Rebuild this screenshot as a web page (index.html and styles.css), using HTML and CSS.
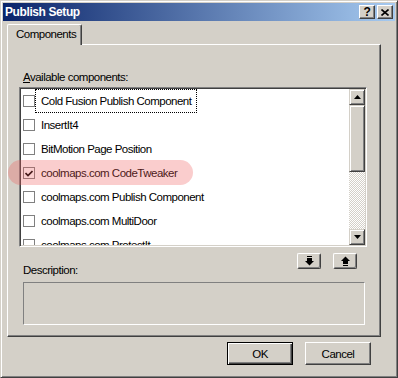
FILE: index.html
```html
<!DOCTYPE html>
<html lang="en">
<head>
  <meta charset="UTF-8" />
  <title>Publish Setup</title>
  <link rel="stylesheet" href="styles.css">
</head>
<body>
  <div class="window">
    <div class="titlebar">
      <span class="title">Publish Setup</span>
      <div class="caption-btns">
        <button class="cap help">?</button>
        <button class="cap">
          <svg width="8" height="7" viewBox="0 0 8 7"><path d="M0.5 0.5 L7.5 6.5 M7.5 0.5 L0.5 6.5" stroke="#000" stroke-width="1.6" fill="none"/></svg>
        </button>
      </div>
    </div>

    <div class="tabs">
      <div class="tab">Components</div>
    </div>

    <div class="panel">
      <div class="label"><u>A</u>vailable components:</div>
      <div class="listbox">
        <ul class="items">
          <li class="item"><span class="check"></span><span class="name focus">Cold Fusion Publish Component</span></li>
          <li class="item"><span class="check"></span><span class="name">InsertIt4</span></li>
          <li class="item"><span class="check"></span><span class="name">BitMotion Page Position</span></li>
          <li class="item"><span class="check"><svg width="8" height="7" viewBox="0 0 8 7"><path d="M0.5 3 L3 5.5 L7.5 1" stroke="#000" stroke-width="1.7" fill="none"/></svg></span><span class="name">coolmaps.com CodeTweaker</span></li>
          <li class="item"><span class="check"></span><span class="name">coolmaps.com Publish Component</span></li>
          <li class="item"><span class="check"></span><span class="name">coolmaps.com MultiDoor</span></li>
          <li class="item"><span class="check"></span><span class="name">coolmaps.com ProtectIt</span></li>
        </ul>
        <div class="scrollbar">
          <div class="sbtn"><svg width="7" height="4" viewBox="0 0 7 4"><path d="M3.5 0 L7 4 L0 4 Z" fill="#000"/></svg></div>
          <div class="thumb"></div>
          <div class="track"></div>
          <div class="sbtn"><svg width="7" height="4" viewBox="0 0 7 4"><path d="M0 0 L7 0 L3.5 4 Z" fill="#000"/></svg></div>
        </div>
      </div>

      <div class="move-row">
        <button class="move">
          <svg width="9" height="10" viewBox="0 0 9 10"><rect x="2" y="0" width="5" height="1" fill="#000"/><rect x="2" y="2" width="5" height="3" fill="#000"/><path d="M0 5 L9 5 L4.5 9.5 Z" fill="#000"/></svg>
        </button>
        <button class="move">
          <svg width="9" height="10" viewBox="0 0 9 10"><path d="M4.5 0.5 L9 5 L0 5 Z" fill="#000"/><rect x="2" y="5" width="5" height="3" fill="#000"/><rect x="2" y="9" width="5" height="1" fill="#000"/></svg>
        </button>
      </div>

      <div class="label desc-label">Description:</div>
      <div class="desc"></div>

      <!-- marker drawn over the checked row -->
      <div class="highlight"></div>
    </div>

    <div class="actions">
      <button class="btn default">OK</button>
      <button class="btn">Cancel</button>
    </div>
  </div>
</body>
</html>
```

FILE: styles.css
```css
body {
  margin: 0;
  background: #d4d0c8;
  font-family: "Liberation Sans", Arial, sans-serif;
  font-size: 11.5px;
  letter-spacing: -0.5px;
  color: #000;
}
button {
  font-family: inherit;
  font-size: inherit;
  letter-spacing: inherit;
  color: #000;
  margin: 0;
  padding: 0;
}
.window {
  width: 398px;
  height: 378px;
  box-sizing: border-box;
  background: #d4d0c8;
  border: 1px solid;
  border-color: #d4d0c8 #404040 #404040 #d4d0c8;
  box-shadow: inset 1px 1px #fff, inset -1px -1px #808080;
  padding: 2px;
}
.titlebar {
  height: 18px;
  display: flex;
  align-items: center;
  justify-content: space-between;
  background: linear-gradient(to right, #0a246a, #a6caf0);
  color: #fff;
  padding: 0 2px;
}
.title {
  font-weight: bold;
  font-size: 12px;
  letter-spacing: -0.4px;
}
.caption-btns {
  display: flex;
  gap: 2px;
}
.cap {
  width: 16px;
  height: 14px;
  box-sizing: border-box;
  background: #d4d0c8;
  border: 1px solid;
  border-color: #fff #404040 #404040 #fff;
  box-shadow: inset -1px -1px #808080;
  display: flex;
  align-items: center;
  justify-content: center;
}
.cap.help {
  font-weight: bold;
  font-size: 12px;
  line-height: 12px;
}
.tabs {
  margin: 3px 0 0 4px;
  height: 20px;
  display: flex;
}
.tab {
  position: relative;
  z-index: 1;
  width: 75px;
  height: 21px;
  box-sizing: border-box;
  background: #d4d0c8;
  border-top: 1px solid #fff;
  border-left: 1px solid #fff;
  border-right: 1px solid #404040;
  box-shadow: inset -1px 0 #808080;
  border-top-left-radius: 2px;
  border-top-right-radius: 2px;
  padding: 2px 0 0 8px;
  line-height: 14px;
}
.panel {
  position: relative;
  margin-left: 4px;
  width: 374px;
  height: 293px;
  box-sizing: border-box;
  border: 1px solid;
  border-color: #fff #404040 #404040 #fff;
  box-shadow: inset -1px -1px #808080;
  padding: 25px 12px 0 11px;
}
.label {
  line-height: 14px;
  margin-left: 4px;
}
.listbox {
  margin-top: 3px;
  width: 348px;
  height: 160px;
  box-sizing: border-box;
  border: 1px solid;
  border-color: #808080 #fff #fff #808080;
  box-shadow: inset 1px 1px #404040, inset -1px -1px #d4d0c8;
  padding: 1px;
  display: flex;
  background: #fff;
}
.items {
  flex: 1;
  overflow: hidden;
  list-style: none;
  margin: 0;
  padding: 0;
}
.item {
  height: 24px;
  display: flex;
  align-items: center;
  padding-left: 2px;
}
.check {
  flex: none;
  width: 12px;
  height: 12px;
  box-sizing: border-box;
  border: 1px solid #808080;
  background: #fff;
  display: flex;
  align-items: center;
  justify-content: center;
}
.name {
  height: 24px;
  box-sizing: border-box;
  line-height: 22px;
  padding: 0 5px;
  border: 1px solid transparent;
  white-space: nowrap;
}
.name.focus {
  border: 1px dotted #000;
}
.scrollbar {
  flex: none;
  width: 16px;
  display: flex;
  flex-direction: column;
}
.sbtn, .thumb {
  box-sizing: border-box;
  background: #d4d0c8;
  border: 1px solid;
  border-color: #d4d0c8 #404040 #404040 #d4d0c8;
  box-shadow: inset 1px 1px #fff, inset -1px -1px #808080;
}
.sbtn {
  height: 16px;
  display: flex;
  align-items: center;
  justify-content: center;
}
.thumb {
  height: 67px;
}
.track {
  flex: 1;
  background-image: conic-gradient(#fff 25%, #d4d0c8 0 50%, #fff 0 75%, #d4d0c8 0);
  background-size: 2px 2px;
}
.move-row {
  display: flex;
  justify-content: flex-end;
  gap: 12px;
  margin-top: 6px;
  padding-right: 11px;
}
.move {
  width: 24px;
  height: 16px;
  box-sizing: border-box;
  background: #d4d0c8;
  border: 1px solid;
  border-color: #fff #404040 #404040 #fff;
  box-shadow: inset -1px -1px #808080;
  border-radius: 2px;
  display: flex;
  align-items: center;
  justify-content: center;
}
.desc-label {
  margin-top: -6px;
}
.desc {
  margin: 5px 0 0 4px;
  width: 342px;
  height: 43px;
  box-sizing: border-box;
  border: 1px solid;
  border-color: #808080 #fff #fff #808080;
}
.highlight {
  position: absolute;
  left: 0;
  top: 115px;
  width: 185px;
  height: 25px;
  border-radius: 13px;
  background: rgba(240, 90, 90, 0.3);
  pointer-events: none;
}
.actions {
  display: flex;
  justify-content: flex-end;
  gap: 12px;
  margin-top: 5px;
  padding-right: 24px;
}
.btn {
  width: 66px;
  height: 23px;
  box-sizing: border-box;
  background: #d4d0c8;
  border: 1px solid;
  border-color: #fff #404040 #404040 #fff;
  box-shadow: inset -1px -1px #808080;
}
.btn.default {
  border: 1px solid #000;
  box-shadow: inset 1px 1px #fff, inset -1px -1px #404040, inset -2px -2px #808080;
}
```
